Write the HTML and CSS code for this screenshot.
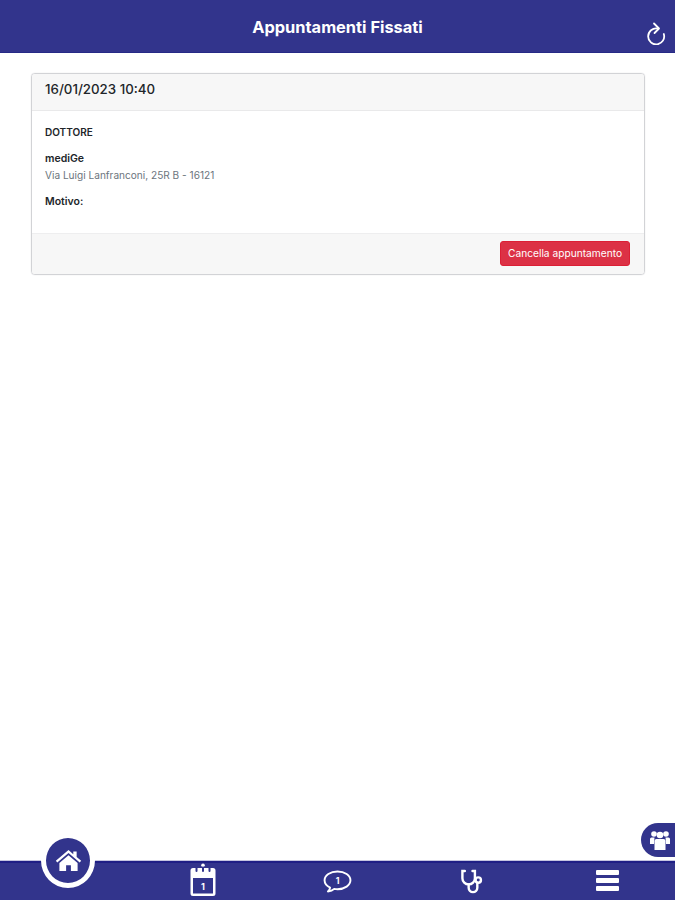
FILE: index.html
```html
<!DOCTYPE html>
<html lang="it">
<head>
<meta charset="utf-8">
<title>Appuntamenti Fissati</title>
<link rel="stylesheet" href="styles.css">
</head>
<body>
<div class="app">
  <header class="topbar">
    <h1 class="title">Appuntamenti Fissati</h1>
    <svg class="refresh" viewBox="0 0 22 24" width="22" height="24" fill="none" stroke="#fff" stroke-width="1.8" stroke-linecap="round" stroke-linejoin="round">
      <path d="M13.500 7.500a8 8 0 1 0 6.300 5.500"/>
      <path d="M10 2.500l5 5-4.500 4.500"/>
    </svg>
  </header>
  <main class="content">
    <section class="card">
      <div class="card-head">16/01/2023 10:40</div>
      <div class="card-body">
        <p class="label">DOTTORE</p>
        <p class="name">mediGe</p>
        <p class="addr">Via Luigi Lanfranconi, 25R B - 16121</p>
        <p class="reason">Motivo:</p>
      </div>
      <div class="card-foot">
        <button class="danger" type="button">Cancella appuntamento</button>
      </div>
    </section>
  </main>
  <nav class="tabbar">
    <span class="tab tab-home"></span>
    <span class="tab">
      <svg class="ico-cal" viewBox="0 0 26 33" width="26" height="33">
        <circle cx="13" cy="2.200" r="1.800" fill="#fff"/>
        <path d="M3 5h20a2.500 2.500 0 0 1 2.500 2.500v23a2.500 2.500 0 0 1-2.500 2.500H3a2.500 2.500 0 0 1-2.500-2.500v-23A2.500 2.500 0 0 1 3 5z" fill="#fff"/>
        <rect x="3" y="15" width="20" height="15.500" fill="#32348c"/>
        <path d="M6.500 4.500v3.500M13 4.500v3.500M19.500 4.500v3.500" stroke="#32348c" stroke-width="2" stroke-linecap="round"/>
        <text x="13" y="27" class="cal-num" text-anchor="middle">1</text>
      </svg>
    </span>
    <span class="tab">
      <svg class="ico-chat" viewBox="0 0 30 24" width="29" height="23">
        <path d="M15 1.500C7.500 1.500 1.500 5.600 1.500 10.800c0 3.300 2.300 6 5.800 7.700-.2 1.500-1 2.800-2.300 3.900 2.700-.2 5-1.100 6.600-2.700 1.100.2 2.200.3 3.400.3 7.500 0 13.500-4.100 13.500-9.200S22.500 1.500 15 1.500z" fill="none" stroke="#fff" stroke-width="2" stroke-linejoin="round"/>
        <text x="15" y="14.500" class="chat-num" text-anchor="middle">1</text>
      </svg>
    </span>
    <span class="tab">
      <svg class="ico-steth" viewBox="0 0 26 26" width="25" height="25" fill="none" stroke="#fff" stroke-width="2.500" stroke-linecap="round">
        <path d="M5 2H2.500v7.500a6.500 6.500 0 0 0 13 0V2H13"/>
        <path d="M9 16v3.500a4.500 4.500 0 0 0 9 0V15"/>
        <circle cx="19" cy="11.500" r="2.800"/>
      </svg>
    </span>
    <span class="tab">
      <span class="burger"><i></i><i></i><i></i></span>
    </span>
  </nav>
  <a class="home-btn">
    <svg viewBox="0 0 28 24" width="27" height="23" fill="#fff">
      <path d="M14 1L.8 12.200l1.500 1.800L14 4.200 25.700 14l1.500-1.800L22.500 8.300V2.500h-3.500v2.900z"/>
      <path d="M14 6.500L4.500 14.500V23h7v-6h5v6h7v-8.500z"/>
    </svg>
  </a>
  <a class="side-tab">
    <svg viewBox="0 0 20 20" width="20" height="20" fill="#fff">
      <circle cx="4" cy="4" r="2.800"/>
      <circle cx="16" cy="4" r="2.800"/>
      <circle cx="10" cy="5" r="3.300"/>
      <path d="M0 9q0-1.500 1.500-1.500h3L4 14H0zM20 9q0-1.500-1.500-1.500h-3L16 14h4z"/>
      <path d="M4.500 11q0-2 2-2h7q2 0 2 2v9h-11z"/>
    </svg>
  </a>
</div>
</body>
</html>
```
FILE: styles.css
```css
* { box-sizing: border-box; }
html, body { margin: 0; height: 100%; }
body { font-family: Inter, "Liberation Sans", sans-serif; color: #212529; background: #fff; }
.app { position: relative; height: 900px; display: flex; flex-direction: column; overflow: hidden; }
.topbar { position: relative; height: 53px; flex: none; background: #32348c; border-bottom: 1px solid #262a86; display: flex; justify-content: center; align-items: flex-start; }
.title { margin: 17px 0 0; font: 700 16.400px/20px Inter, "Liberation Sans", sans-serif; color: #fff; }
.refresh { position: absolute; right: 9px; top: 21px; }
.content { flex: 1; padding: 20px 30px 0 31px; }
.card { border: 1px solid #d2d3d6; border-radius: 4px; box-shadow: 0 0 1px #c8c9cc; }
.card-head { height: 37px; padding: 8px 13px 0; background: #f7f7f7; border-bottom: 1px solid #e9e9ea; font-size: 13.300px; font-weight: 500; line-height: 15px; border-radius: 3px 3px 0 0; }
.card-body { height: 122px; padding: 15px 13px 0; font-size: 10.100px; line-height: 12px; }
.card-body p { margin: 0; }
.label { font-weight: 600; font-size: 10px; }
.card-body .name { margin-top: 15px; font-weight: 600; font-size: 10.500px; }
.card-body .addr { margin-top: 4px; color: #6c757d; }
.card-body .reason { margin-top: 15px; font-weight: 600; font-size: 10.500px; }
.card-foot { height: 41px; background: #f7f7f7; border-top: 1px solid #eeeeef; display: flex; justify-content: flex-end; padding: 7px 14px 0 0; border-radius: 0 0 3px 3px; }
.danger { width: 130px; height: 25px; padding: 0; border: 1px solid #dc1f35; border-radius: 3px; background: #dc3145; color: #fff; font: 400 10.200px/1 Inter, "Liberation Sans", sans-serif; }
.tabbar { height: 39px; flex: none; background: #32348c; border-top: 2px solid #1f1f85; box-shadow: 0 -1px 0 #c5c6e0; display: grid; grid-template-columns: repeat(5, 135px); }
.tab { display: flex; justify-content: center; align-items: flex-start; }
.ico-chat { margin-top: 7px; }
.ico-steth { margin-top: 6px; }
.cal-num { font: 700 9px Inter, sans-serif; fill: #fff; }
.chat-num { font: 700 9px Inter, sans-serif; fill: #fff; }
.burger { display: flex; flex-direction: column; gap: 3px; width: 23px; margin-top: 7px; }
.burger i { display: block; height: 5px; background: #fff; border-radius: 1px; }
.home-btn { position: absolute; left: 41px; top: 833px; width: 54px; height: 55px; border-radius: 50%; background: #32348c; border: 5px solid #fff; display: flex; align-items: center; justify-content: center; }
.side-tab { position: absolute; right: 0; top: 823px; width: 34px; height: 34px; background: #32348c; border-radius: 17px 0 0 17px; display: flex; align-items: center; padding-left: 9px; }
```
